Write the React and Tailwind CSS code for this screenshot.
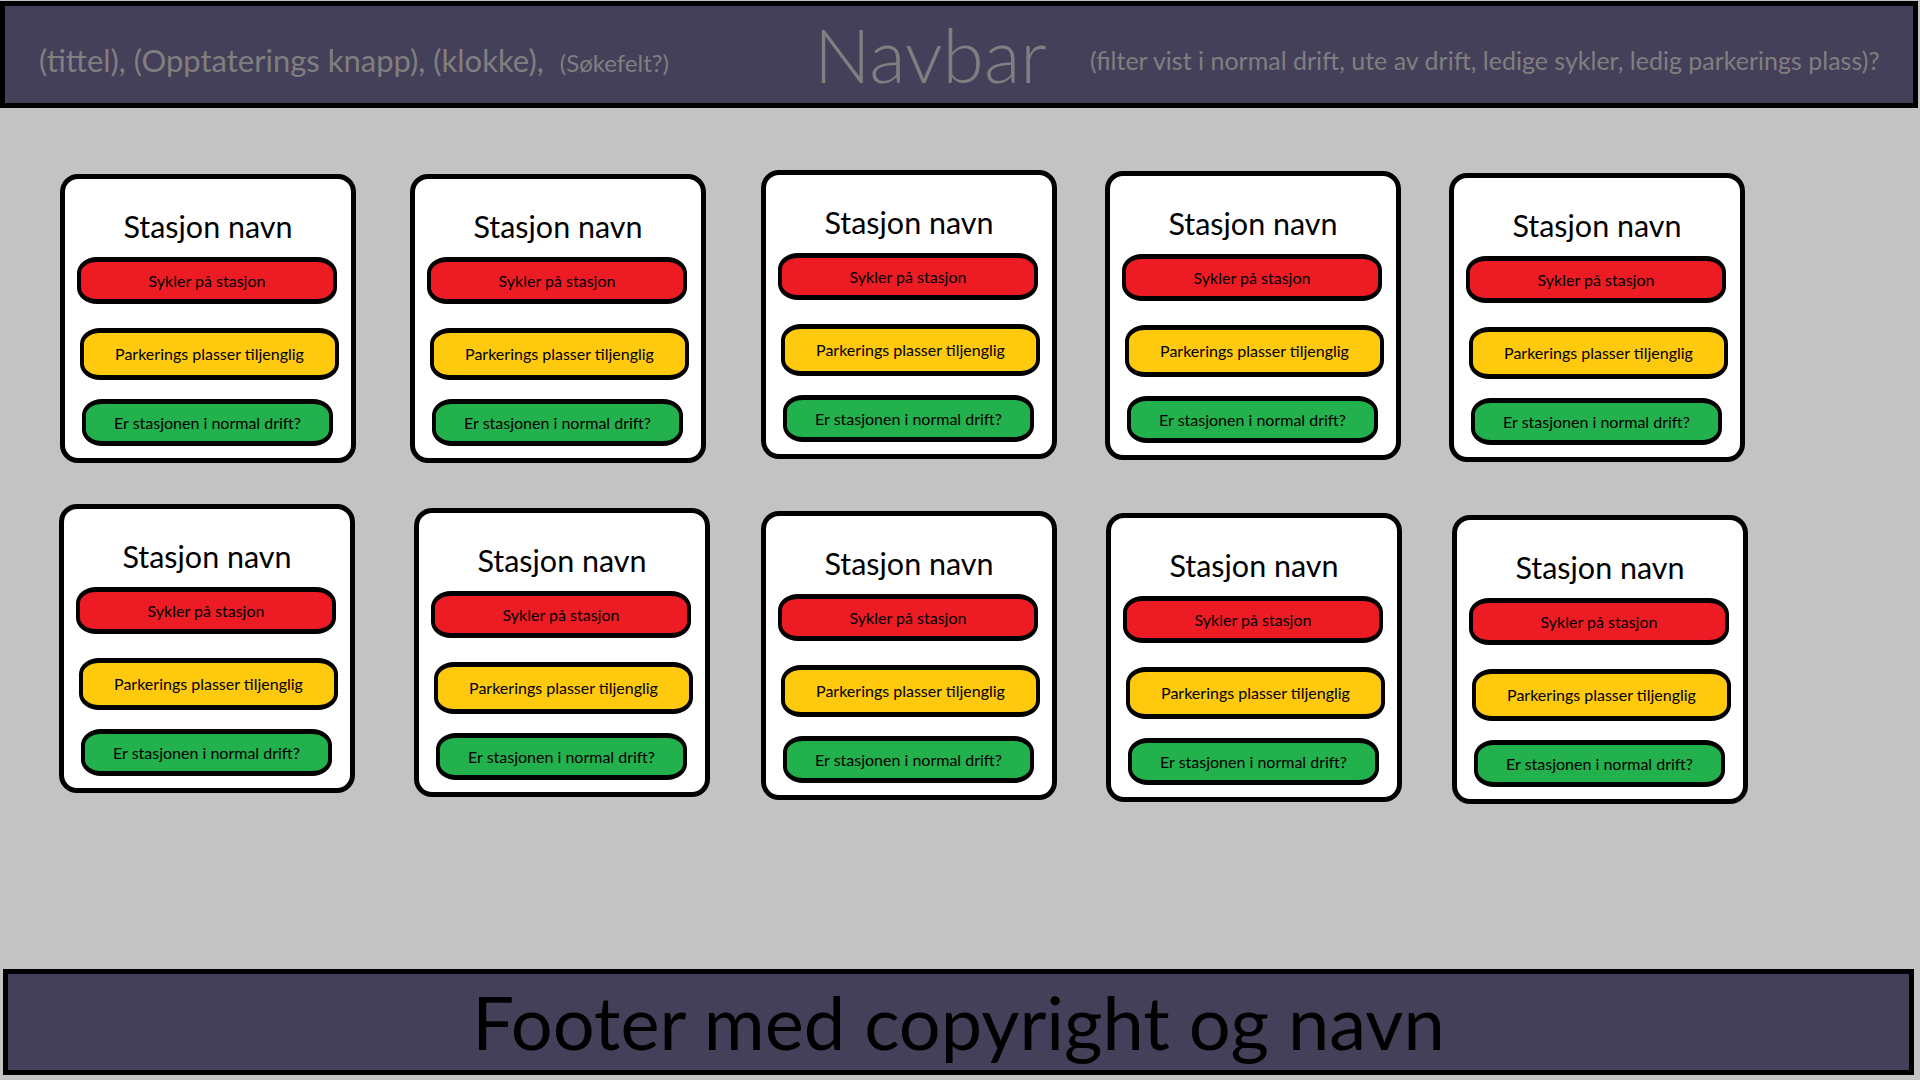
const font = { fontFamily: "Lato, 'Open Sans', 'Liberation Sans', sans-serif" };

const rows = [
  [
    { ml: "ml-[60px]", mt: "mt-[4px]" },
    { ml: "ml-[54px]", mt: "mt-[4px]" },
    { ml: "ml-[55px]", mt: "mt-0" },
    { ml: "ml-[48px]", mt: "mt-[1px]" },
    { ml: "ml-[48px]", mt: "mt-[3px]" }
  ],
  [
    { ml: "ml-[59px]", mt: "mt-0" },
    { ml: "ml-[59px]", mt: "mt-[4px]" },
    { ml: "ml-[51px]", mt: "mt-[7px]" },
    { ml: "ml-[49px]", mt: "mt-[9px]" },
    { ml: "ml-[50px]", mt: "mt-[11px]" }
  ]
];

export default function App() {
  return (
    <div
      className="w-[1920px] h-[1080px] bg-[#c3c3c3] flex flex-col overflow-hidden"
      style={font}
    >
      <Navbar />

      <main className="flex-1 pt-[62px] flex flex-col gap-[41px]">
        {rows.map((row, i) => (
          <div key={i} className="flex items-start">
            {row.map((card, j) => (
              <StationCard key={j} className={`${card.ml} ${card.mt}`} />
            ))}
          </div>
        ))}
      </main>

      <footer className="ml-[3px] mb-[5px] w-[1911px] h-[106px] border-[5px] border-black bg-[#45405a] flex items-center justify-center">
        <p className="text-[74px] leading-none text-black">
          Footer med copyright og navn
        </p>
      </footer>
    </div>
  );
}

function Navbar() {
  return (
    <header className="mt-[1px] w-[1918px] h-[107px] border-[5px] border-black bg-[#45405a] flex items-center text-[#7f7f7f]">
      <div className="w-[809px] pl-[34px] pt-[12px] flex items-baseline gap-[16px] whitespace-nowrap">
        <span className="text-[31px]">
          (tittel), (Opptaterings knapp), (klokke),
        </span>
        <span className="text-[24px]">(Søkefelt?)</span>
      </div>

      <div className="w-[276px] text-[75px] font-light leading-none">
        Navbar
      </div>

      <p className="pt-[12px] text-[25px] whitespace-nowrap">
        (filter vist i normal drift, ute av drift, ledige sykler, ledig
        parkerings plass)?
      </p>
    </header>
  );
}

function StationCard({ className }) {
  return (
    <div
      className={`${className} w-[296px] h-[289px] shrink-0 rounded-[18px] border-[5px] border-black bg-white flex flex-col`}
    >
      <p className="mt-[29px] text-center text-[30.5px] leading-[36px] text-black">
        Stasjon navn
      </p>

      <div className="mt-[13px] ml-[12px] w-[260px] h-[47px] rounded-[20px/16px] border-x-[4px] border-y-[5px] border-black bg-[#ed1c24] flex items-center justify-center text-[16px] text-black">
        Sykler på stasjon
      </div>

      <div className="mt-[24px] ml-[15px] w-[259px] h-[52px] rounded-[20px/16px] border-x-[4px] border-y-[5px] border-black bg-[#ffc90e] flex items-center justify-center text-[16px] text-black">
        Parkerings plasser tiljenglig
      </div>

      <div className="mt-[19px] ml-[17px] w-[251px] h-[47px] rounded-[20px/16px] border-x-[4px] border-y-[5px] border-black bg-[#22b14c] flex items-center justify-center text-[16px] text-black">
        Er stasjonen i normal drift?
      </div>
    </div>
  );
}
